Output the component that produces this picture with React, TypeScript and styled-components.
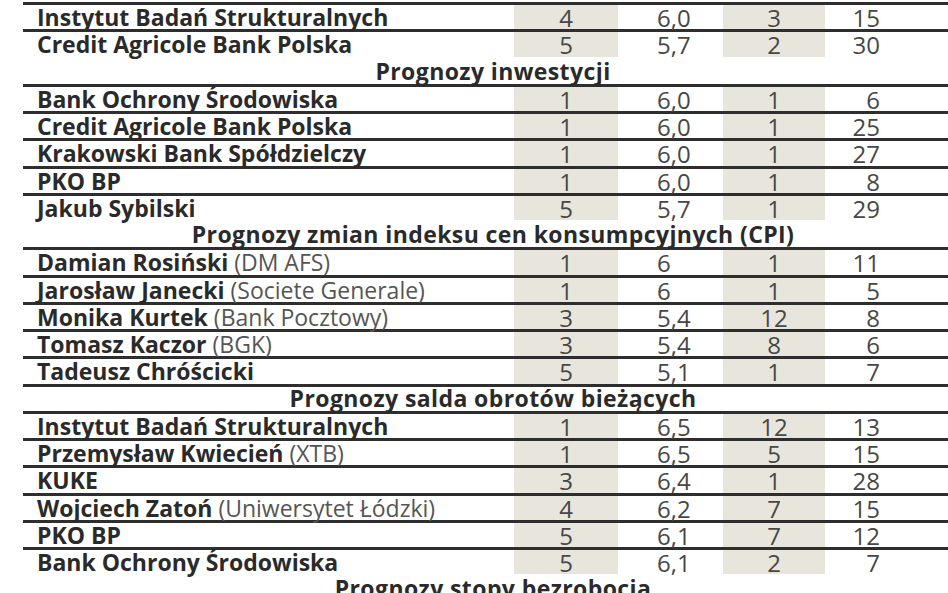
import React from "react";
import styled, { createGlobalStyle } from "styled-components";

const GlobalStyle = createGlobalStyle`
  html, body {
    margin: 0;
    padding: 0;
    background: #ffffff;
  }
`;

type DataRow = {
  kind: "row";
  name: string;
  org?: string;
  a: string;
  b: string;
  c: string;
  d: string;
  noLine?: boolean;
};
type HeadRow = { kind: "head"; title: string };
type Item = DataRow | HeadRow;

const items: Item[] = [
  { kind: "row", name: "Instytut Badań Strukturalnych", a: "4", b: "6,0", c: "3", d: "15" },
  { kind: "row", name: "Credit Agricole Bank Polska", a: "5", b: "5,7", c: "2", d: "30", noLine: true },
  { kind: "head", title: "Prognozy inwestycji" },
  { kind: "row", name: "Bank Ochrony Środowiska", a: "1", b: "6,0", c: "1", d: "6" },
  { kind: "row", name: "Credit Agricole Bank Polska", a: "1", b: "6,0", c: "1", d: "25" },
  { kind: "row", name: "Krakowski Bank Spółdzielczy", a: "1", b: "6,0", c: "1", d: "27" },
  { kind: "row", name: "PKO BP", a: "1", b: "6,0", c: "1", d: "8" },
  { kind: "row", name: "Jakub Sybilski", a: "5", b: "5,7", c: "1", d: "29", noLine: true },
  { kind: "head", title: "Prognozy zmian indeksu cen konsumpcyjnych (CPI)" },
  { kind: "row", name: "Damian Rosiński", org: "(DM AFS)", a: "1", b: "6", c: "1", d: "11" },
  { kind: "row", name: "Jarosław Janecki", org: "(Societe Generale)", a: "1", b: "6", c: "1", d: "5" },
  { kind: "row", name: "Monika Kurtek", org: "(Bank Pocztowy)", a: "3", b: "5,4", c: "12", d: "8" },
  { kind: "row", name: "Tomasz Kaczor", org: "(BGK)", a: "3", b: "5,4", c: "8", d: "6" },
  { kind: "row", name: "Tadeusz Chróścicki", a: "5", b: "5,1", c: "1", d: "7" },
  { kind: "head", title: "Prognozy salda obrotów bieżących" },
  { kind: "row", name: "Instytut Badań Strukturalnych", a: "1", b: "6,5", c: "12", d: "13" },
  { kind: "row", name: "Przemysław Kwiecień", org: "(XTB)", a: "1", b: "6,5", c: "5", d: "15" },
  { kind: "row", name: "KUKE", a: "3", b: "6,4", c: "1", d: "28" },
  { kind: "row", name: "Wojciech Zatoń", org: "(Uniwersytet Łódzki)", a: "4", b: "6,2", c: "7", d: "15" },
  { kind: "row", name: "PKO BP", a: "5", b: "6,1", c: "7", d: "12" },
  { kind: "row", name: "Bank Ochrony Środowiska", a: "5", b: "6,1", c: "2", d: "7", noLine: true },
  { kind: "head", title: "Prognozy stopy bezrobocia" },
];

const LINE = "#2e2e2e";
const SHADE = "#e8e6dc";
const PITCH = 27.25;
const RULE = 3;

// whole-pixel row heights so the rules land on pixel rows
const rowHeight = (i: number) =>
  Math.round(PITCH * (i + 1)) - Math.round(PITCH * i) - RULE;

const Page = styled.div`
  width: 925px;
  height: 591px;
  padding: 2px 0 0 23px;
  overflow: hidden;
`;

const Table = styled.div`
  width: 940px;
  font-family: "Open Sans", "DejaVu Sans", sans-serif;
`;

const Rule = styled.div<{ $visible: boolean }>`
  height: ${RULE}px;
  background: ${(p) => (p.$visible ? LINE : "transparent")};
`;

const Row = styled.div<{ $h: number }>`
  display: flex;
  height: ${(p) => p.$h}px;
`;

const Name = styled.div`
  width: 491px;
  flex: none;
  box-sizing: border-box;
  padding: 2px 0 0 14px;
  font-size: 23px;
  font-weight: 700;
  color: #2a2a2a;
  line-height: 21px;
  white-space: nowrap;
`;

const Org = styled.span`
  font-weight: 400;
  color: #555555;
`;

const Cell = styled.div<{ $w: number; $shade?: boolean; $align: "center" | "left" | "right" }>`
  width: ${(p) => p.$w}px;
  flex: none;
  box-sizing: border-box;
  padding-top: 2px;
  background: ${(p) => (p.$shade ? SHADE : "transparent")};
  text-align: ${(p) => p.$align};
  padding-left: ${(p) => (p.$align === "left" ? "39px" : "0")};
  font-size: 24px;
  font-weight: 400;
  color: #474747;
  line-height: 21px;
`;

const Head = styled.div<{ $h: number }>`
  height: ${(p) => p.$h}px;
  box-sizing: border-box;
  padding-top: 1px;
  text-align: center;
  font-size: 23px;
  font-weight: 700;
  letter-spacing: 0.4px;
  color: #2a2a2a;
  line-height: 21px;
  white-space: nowrap;
`;

export default function App() {
  return (
    <>
      <GlobalStyle />
      <Page>
        <Table>
          <Rule $visible />
          {items.map((it, i) =>
            it.kind === "head" ? (
              <React.Fragment key={i}>
                <Head $h={rowHeight(i)}>{it.title}</Head>
                <Rule $visible />
              </React.Fragment>
            ) : (
              <React.Fragment key={i}>
                <Row $h={rowHeight(i)}>
                  <Name>
                    {it.name}
                    {it.org && <Org> {it.org}</Org>}
                  </Name>
                  <Cell $w={104} $shade $align="center">{it.a}</Cell>
                  <Cell $w={105} $align="left">{it.b}</Cell>
                  <Cell $w={102} $shade $align="center">{it.c}</Cell>
                  <Cell $w={55} $align="right">{it.d}</Cell>
                </Row>
                <Rule $visible={!it.noLine} />
              </React.Fragment>
            )
          )}
        </Table>
      </Page>
    </>
  );
}
